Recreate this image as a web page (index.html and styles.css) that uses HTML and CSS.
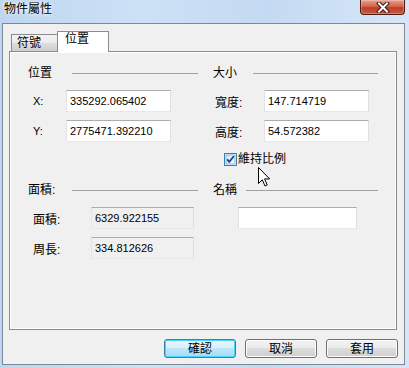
FILE: index.html
```html
<!DOCTYPE html>
<html lang="zh-Hant">
<head>
  <meta charset="UTF-8" />
  <title>物件屬性</title>
  <link rel="stylesheet" href="styles.css">
</head>
<body>
  <!-- TITLE BAR -->
  <div class="titlebar">
    <span class="title">物件屬性</span>
    <div class="close">
      <svg width="16" height="11" viewBox="0 0 16 11">
        <path d="M4 1.5 L12 9.5 M12 1.5 L4 9.5" stroke="#3b1710" stroke-width="4" stroke-linecap="square" fill="none"/>
        <path d="M4 1.5 L12 9.5 M12 1.5 L4 9.5" stroke="#fff" stroke-width="2" stroke-linecap="square" fill="none"/>
      </svg>
    </div>
  </div>

  <!-- DIALOG -->
  <div class="client">
    <div class="tabs">
      <div class="tab tab-off">符號</div>
      <div class="tab tab-on">位置</div>
    </div>

    <div class="panel">
      <div class="section">
        <div class="group left">
          <div class="group-head"><span class="head-l">位置</span><i class="rule"></i></div>
          <div class="field first"><span class="lbl lbl-l latin">X:</span><input class="box" type="text" value="335292.065402" /></div>
          <div class="field"><span class="lbl lbl-l latin">Y:</span><input class="box" type="text" value="2775471.392210" /></div>
        </div>
        <div class="group right">
          <div class="group-head"><span class="head-size">大小</span><i class="rule"></i></div>
          <div class="field first"><span class="lbl lbl-r">寬度:</span><input class="box" type="text" value="147.714719" /></div>
          <div class="field"><span class="lbl lbl-r">高度:</span><input class="box" type="text" value="54.572382" /></div>
          <label class="check">
            <svg width="13" height="13" viewBox="0 0 13 13">
              <defs>
                <linearGradient id="cb" x1="0" y1="0" x2="1" y2="1">
                  <stop offset="0" stop-color="#cfe9f9"/>
                  <stop offset="1" stop-color="#f4fbff"/>
                </linearGradient>
              </defs>
              <rect x="0.5" y="0.5" width="12" height="12" fill="#fff" stroke="#3c7fb1"/>
              <rect x="2" y="2" width="9" height="9" fill="url(#cb)" stroke="#7fb6dd" stroke-width="1"/>
              <path d="M3.2 6.4 L5.3 8.8 L9.8 3.2" stroke="#1f3c88" stroke-width="1.8" fill="none"/>
            </svg>
            <span>維持比例</span>
          </label>
        </div>
      </div>

      <div class="section lower">
        <div class="group left">
          <div class="group-head"><span class="head-l">面積:</span><i class="rule"></i></div>
          <div class="field first"><span class="lbl lbl-wide">面積:</span><input class="box readonly" type="text" value="6329.922155" readonly /></div>
          <div class="field"><span class="lbl lbl-wide">周長:</span><input class="box readonly" type="text" value="334.812626" readonly /></div>
        </div>
        <div class="group right">
          <div class="group-head"><span class="head-name">名稱</span><i class="rule"></i></div>
          <div class="field first"><input class="box name" type="text" value="" /></div>
        </div>
      </div>
    </div>

    <div class="buttons">
      <button class="btn default">確認</button>
      <button class="btn">取消</button>
      <button class="btn">套用</button>
    </div>
  </div>

  <!-- mouse pointer -->
  <svg class="cursor" width="13" height="21" viewBox="0 0 13 21">
    <path d="M0.5 0.5 L0.5 16.5 L4.3 12.8 L7 19 L9.2 18 L6.6 11.9 L11.6 11.9 Z" fill="#fff" stroke="#000" stroke-width="1" stroke-linejoin="miter"/>
  </svg>
</body>
</html>
```

FILE: styles.css
```css
body {
  margin: 0;
  width: 409px;
  height: 368px;
  overflow: hidden;
  position: relative;
  background: linear-gradient(90deg, #bed6ef 0%, #cde1f6 35%, #c4daf2 65%, #d6e6f8 100%);
  font: 12px "Liberation Sans", "Noto Sans CJK TC", sans-serif;
  color: #000;
}
.titlebar {
  height: 23px;
  display: flex;
  justify-content: space-between;
  align-items: flex-start;
}
.title {
  margin: 3px 0 0 4px;
  line-height: 13px;
  font-size: 12px;
  text-shadow: 0 0 5px #fff, 0 0 3px #fff;
}
.close {
  width: 45px;
  height: 15px;
  margin-right: 4px;
  box-sizing: border-box;
  border: 1px solid #4d1b13;
  border-top: none;
  border-radius: 0 0 4px 4px;
  background: linear-gradient(#e6a08f, #d4654f 45%, #bd3f28 55%, #c85a43);
  box-shadow: inset 0 0 0 1px rgba(255,255,255,0.25);
  display: flex;
  justify-content: center;
  align-items: center;
}
.client {
  margin-left: 2px;
  width: 403px;
  height: 342px;
  box-sizing: border-box;
  border: 1px solid #7d8894;
  background: #f0f0f0;
  padding: 7px 6px 0 6px;
}
.tabs {
  display: flex;
  align-items: flex-end;
  height: 20px;
  margin-left: 2px;
}
.tab {
  box-sizing: border-box;
  border: 1px solid #898c95;
  border-bottom: none;
}
.tab-off {
  width: 46px;
  height: 17px;
  padding: 2px 0 0 5px;
  line-height: 13px;
  border-right: none;
  background: linear-gradient(#f2f2f2, #ebebeb 50%, #dddddd 50%, #cfcfcf);
}
.tab-on {
  width: 52px;
  height: 21px;
  padding: 1px 0 0 7px;
  line-height: 13px;
  margin-bottom: -1px;
  background: #fff;
  position: relative;
  z-index: 1;
}
.panel {
  width: 388px;
  height: 279px;
  box-sizing: border-box;
  border: 1px solid #898c95;
  box-shadow: inset 1px 1px 0 #fff, inset -1px -1px 0 #fff;
  padding: 15px 0 0 18px;
}
.section {
  display: flex;
  align-items: flex-start;
  column-gap: 15px;
}
.section.lower {
  margin-top: 18px;
}
.left {
  width: 170px;
}
.right {
  width: 165px;
}
.group-head {
  display: flex;
  align-items: center;
  height: 12px;
  line-height: 12px;
}
.head-l {
  width: 44px;
}
.head-size {
  width: 40px;
}
.head-name {
  width: 33px;
}
.rule {
  flex: 1;
  border-top: 1px solid #a0a0a0;
}
.field {
  display: flex;
  align-items: center;
  margin-top: 8px;
}
.field.first {
  margin-top: 11px;
}
.lbl {
  box-sizing: border-box;
}
.latin {
  font-size: 11px;
}
.lbl-l {
  width: 38px;
  padding-left: 5px;
}
.lbl-r {
  width: 51px;
  padding-left: 2px;
}
.lbl-wide {
  width: 63px;
  padding-left: 5px;
}
.box {
  box-sizing: border-box;
  width: 105px;
  height: 22px;
  margin: 0;
  padding: 0 3px;
  border: 1px solid;
  border-color: #abadb3 #dbdfe6 #e3e9ef #e2e3ea;
  background: #fff;
  font: 11px "Liberation Sans", sans-serif;
  color: #000;
  outline: none;
}
.box.readonly {
  width: 103px;
  background: #f0f0f0;
}
.box.name {
  width: 119px;
  margin-left: 25px;
}
.check {
  display: flex;
  align-items: center;
  gap: 1px;
  margin: 11px 0 0 11px;
  height: 13px;
  line-height: 13px;
}
.check svg {
  display: block;
}
.buttons {
  display: flex;
  justify-content: flex-end;
  gap: 9px;
  margin-top: 9px;
}
.btn {
  width: 72px;
  height: 19px;
  padding: 0;
  border: 1px solid #707070;
  border-radius: 3px;
  background: linear-gradient(#f2f2f2, #ebebeb 50%, #dddddd 50%, #cfcfcf);
  box-shadow: inset 0 0 0 1px #fcfcfc;
  font: 12px "Liberation Sans", "Noto Sans CJK TC", sans-serif;
  line-height: 16px;
  color: #000;
}
.btn.default {
  border-color: #3c7fb1;
  background: linear-gradient(#eaf6fd, #d9f0fc 50%, #bee6fd 50%, #a7d9f5);
  box-shadow: inset 0 0 0 1px #48d3fc;
}
.cursor {
  position: absolute;
  left: 258px;
  top: 167px;
}
```
